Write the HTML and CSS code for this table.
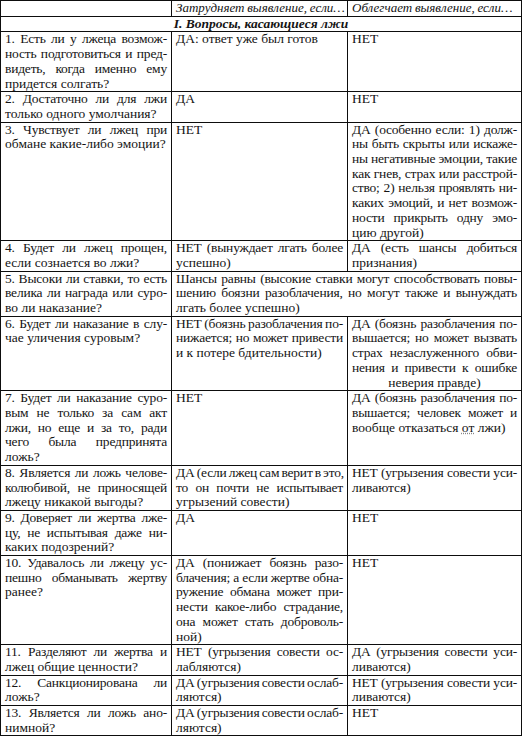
FILE: index.html
```html
<!DOCTYPE html>
<html lang="ru">
<head>
<meta charset="utf-8">
<title>Вопросы, касающиеся лжи</title>
<link rel="stylesheet" href="styles.css">
</head>
<body>
<div class="table">
  <div class="cell"></div>
  <div class="cell head"><span class="l">Затрудняет выявление, если…</span></div>
  <div class="cell head"><span class="l">Облегчает выявление, если…</span></div>

  <div class="cell section span3"><span class="l">I. Вопросы, касающиеся лжи</span></div>

  <div class="cell"><span class="l">1. Есть ли у лжеца возмож-</span><span class="l">ность подготовиться и пред-</span><span class="l">видеть, когда именно ему</span><span class="l">придется солгать?</span></div>
  <div class="cell"><span class="l">ДА: ответ уже был готов</span></div>
  <div class="cell"><span class="l">НЕТ</span></div>

  <div class="cell"><span class="l">2. Достаточно ли для лжи</span><span class="l">только одного умолчания?</span></div>
  <div class="cell"><span class="l">ДА</span></div>
  <div class="cell"><span class="l">НЕТ</span></div>

  <div class="cell"><span class="l">3. Чувствует ли лжец при</span><span class="l">обмане какие-либо эмоции?</span></div>
  <div class="cell"><span class="l">НЕТ</span></div>
  <div class="cell"><span class="l">ДА (особенно если: 1) долж-</span><span class="l">ны быть скрыты или искаже-</span><span class="l">ны негативные эмоции, такие</span><span class="l">как гнев, страх или расстрой-</span><span class="l">ство; 2) нельзя проявлять ни-</span><span class="l">каких эмоций, и нет возмож-</span><span class="l">ности прикрыть одну эмо-</span><span class="l">цию другой)</span></div>

  <div class="cell"><span class="l">4. Будет ли лжец прощен,</span><span class="l">если сознается во лжи?</span></div>
  <div class="cell"><span class="l">НЕТ (вынуждает лгать более</span><span class="l">успешно)</span></div>
  <div class="cell"><span class="l">ДА (есть шансы добиться</span><span class="l">признания)</span></div>

  <div class="cell"><span class="l">5. Высоки ли ставки, то есть</span><span class="l">велика ли награда или суро-</span><span class="l">во ли наказание?</span></div>
  <div class="cell span2"><span class="l">Шансы равны (высокие ставки могут способствовать повы-</span><span class="l">шению боязни разоблачения, но могут также и вынуждать</span><span class="l">лгать более успешно)</span></div>

  <div class="cell"><span class="l">6. Будет ли наказание в слу-</span><span class="l">чае уличения суровым?</span></div>
  <div class="cell"><span class="l">НЕТ (боязнь разоблачения по-</span><span class="l">нижается; но может привести</span><span class="l">и к потере бдительности)</span></div>
  <div class="cell"><span class="l">ДА (боязнь разоблачения по-</span><span class="l">вышается; но может вызвать</span><span class="l">страх незаслуженного обви-</span><span class="l">нения и привести к ошибке</span><span class="l center">неверия правде)</span></div>

  <div class="cell"><span class="l">7. Будет ли наказание суро-</span><span class="l">вым не только за сам акт</span><span class="l">лжи, но еще и за то, ради</span><span class="l">чего была предпринята</span><span class="l">ложь?</span></div>
  <div class="cell"><span class="l">НЕТ</span></div>
  <div class="cell"><span class="l">ДА (боязнь разоблачения по-</span><span class="l">вышается; человек может и</span><span class="l">вообще отказаться <span class="mark">от</span> лжи)</span></div>

  <div class="cell"><span class="l">8. Является ли ложь челове-</span><span class="l">колюбивой, не приносящей</span><span class="l">лжецу никакой выгоды?</span></div>
  <div class="cell"><span class="l">ДА (если лжец сам верит в это,</span><span class="l">то он почти не испытывает</span><span class="l">угрызений совести)</span></div>
  <div class="cell"><span class="l">НЕТ (угрызения совести уси-</span><span class="l">ливаются)</span></div>

  <div class="cell"><span class="l">9. Доверяет ли жертва лже-</span><span class="l">цу, не испытывая даже ни-</span><span class="l">каких подозрений?</span></div>
  <div class="cell"><span class="l">ДА</span></div>
  <div class="cell"><span class="l">НЕТ</span></div>

  <div class="cell"><span class="l">10. Удавалось ли лжецу ус-</span><span class="l">пешно обманывать жертву</span><span class="l">ранее?</span></div>
  <div class="cell"><span class="l">ДА (понижает боязнь разо-</span><span class="l">блачения; а если жертве обна-</span><span class="l">ружение обмана может при-</span><span class="l">нести какое-либо страдание,</span><span class="l">она может стать доброволь-</span><span class="l">ной)</span></div>
  <div class="cell"><span class="l">НЕТ</span></div>

  <div class="cell"><span class="l">11. Разделяют ли жертва и</span><span class="l">лжец общие ценности?</span></div>
  <div class="cell"><span class="l">НЕТ (угрызения совести ос-</span><span class="l">лабляются)</span></div>
  <div class="cell"><span class="l">ДА (угрызения совести уси-</span><span class="l">ливаются)</span></div>

  <div class="cell"><span class="l">12. Санкционирована ли</span><span class="l">ложь?</span></div>
  <div class="cell"><span class="l">ДА (угрызения совести ослаб-</span><span class="l">ляются)</span></div>
  <div class="cell"><span class="l">НЕТ (угрызения совести уси-</span><span class="l">ливаются)</span></div>

  <div class="cell"><span class="l">13. Является ли ложь ано-</span><span class="l">нимной?</span></div>
  <div class="cell"><span class="l">ДА (угрызения совести ослаб-</span><span class="l">ляются)</span></div>
  <div class="cell"><span class="l">НЕТ</span></div>
</div>
</body>
</html>
```
FILE: styles.css
```css
html, body {
  margin: 0;
  padding: 0;
  background: #ffffff;
}

body {
  font-family: "Liberation Serif", "Times New Roman", serif;
  font-size: 13.5px;
  line-height: 14.7px;
  color: #141414;
}

.table {
  display: grid;
  grid-template-columns: 170px 175px 173px;
  gap: 1px;
  width: 520px;
  background: #0d0d0d;
  border: 1px solid #0d0d0d;
}

.cell {
  background: #ffffff;
  padding: 0 4px 0 4px;
  min-height: 14.7px;
}

.span2 {
  grid-column: span 2;
}

.span3 {
  grid-column: span 3;
}

.l {
  display: block;
  white-space: nowrap;
  letter-spacing: -0.2px;
  word-spacing: -1px;
  text-align: justify;
  text-align-last: justify;
}

.l:last-child {
  text-align-last: left;
  letter-spacing: 0;
  word-spacing: 0;
}

.l.center {
  text-align: center;
  text-align-last: center;
}

.head .l {
  font-style: italic;
  font-size: 13px;
  letter-spacing: 0;
  word-spacing: -0.5px;
}

.section .l {
  font-weight: bold;
  font-style: italic;
  letter-spacing: 0;
  word-spacing: 0;
  text-align: center;
  text-align-last: center;
}

.mark {
  text-decoration: underline dotted #888888;
}
```
